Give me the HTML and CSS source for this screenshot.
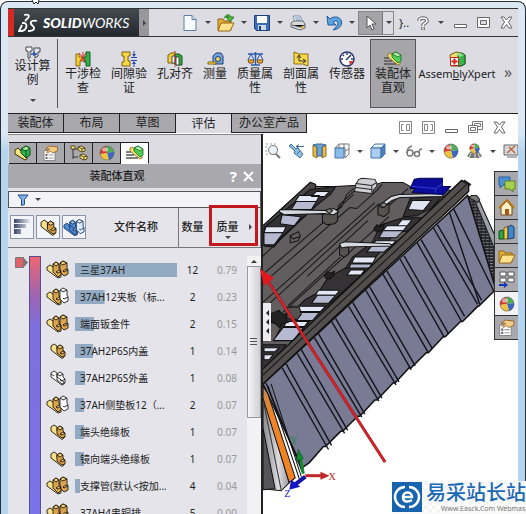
FILE: index.html
```html
<!DOCTYPE html>
<html lang="zh-CN">
<head>
<meta charset="utf-8">
<meta name="viewport" content="width=device-width, initial-scale=1">
<title>SOLIDWORKS</title>
<link rel="stylesheet" href="styles.css">
</head>
<body>
<svg class="defs" aria-hidden="true">
  <defs>
    <symbol id="part" viewBox="0 0 16 16"><path fill="#f8e08a" stroke="#211a0c" stroke-width=".9" d="M1 3l3-2 3 2v4l7 5v2l-2 1.500L1 7z"/><path fill="#d9a04a" stroke="#211a0c" stroke-width=".9" d="M7 4l3-2 3 2v3l2 2v4l-3 1-5-4z"/><path fill="#f3cd7a" stroke="#211a0c" stroke-width=".9" d="M7 4l3-2 3 2-3 2zM10 10l3-2 2 1-3 2z"/></symbol>
    <symbol id="part-white" viewBox="0 0 16 16"><path fill="#fff" stroke="#222" stroke-width=".9" d="M1 3l3-2 3 2v4l7 5v2l-2 1L1 7zM7 4l3-2 3 2v3l2 2v4l-3 1-5-4zM7 4l3 2 3-2M10 10l2 1 3-2M1 4l3 2"/></symbol>
    <symbol id="asm" viewBox="0 0 23 19"><path fill="#f8e08a" stroke="#211a0c" stroke-width=".9" d="M1 7l3-2 3 2 4 3 4 5v2l-3 1L1 10z"/><path fill="#dba44e" stroke="#211a0c" stroke-width=".9" d="M7 4l3-2 3 2v5l2 2v4l-3 2-5-5zM14 3l3-2 4 2v5l1 2v4l-4 2-4-4z"/><path fill="#f3cd7a" stroke="#211a0c" stroke-width=".9" d="M7 4l3-2 3 2-3 2zM14 3l3-2 4 2-4 2zM10 12l3-2 2 1-3 2zM17 11l3-2 2 1-4 2z"/></symbol>
    <symbol id="asm-mixed" viewBox="0 0 23 19"><path fill="#f8e08a" stroke="#211a0c" stroke-width=".9" d="M1 7l3-2 3 2 4 3 4 5v2l-3 1L1 10z"/><path fill="#dba44e" stroke="#211a0c" stroke-width=".9" d="M7 4l3-2 3 2v5l2 2v4l-3 2-5-5z"/><path fill="#f3cd7a" stroke="#211a0c" stroke-width=".9" d="M7 4l3-2 3 2-3 2zM10 12l3-2 2 1-3 2z"/><path fill="#fff" stroke="#222" stroke-width=".9" d="M14 3l3-2 4 2v5l1 2v4l-4 2-4-4zM14 3l3 2 4-2M17 11l1 1 4-2"/></symbol>
    <symbol id="asm-green" viewBox="0 0 17 16"><path fill="#f8e57a" stroke="#3c3208" d="M1 5l3-2 3 3 6 6v2l-2 1L1 9z"/><path fill="#33b44c" stroke="#0c4a1b" d="M7 4l5-3 4 2v7l-4 3-5-5z"/><path fill="#a2e492" stroke="#0c4a1b" d="M7 4l5-3 4 2-4 3z"/><path stroke="#0c4a1b" fill="none" d="M12 6v7"/></symbol>
    <symbol id="lines-part" viewBox="0 0 18 16"><path stroke="#555" stroke-width="1.500" d="M0 7h5M0 10h8M0 13h12"/><path fill="#f5e070" stroke="#7a6a12" stroke-width=".8" d="M4 3l2-1 10 8v3l-2 1L4 6z"/><path fill="#52cf55" stroke="#126a24" stroke-width=".8" d="M8 3l4-2 5 3v6l-3 2-6-6z"/><path fill="#b6efa0" stroke="#126a24" stroke-width=".8" d="M8 3l4-2 5 3-3 2z"/></symbol>
    <symbol id="ball" viewBox="0 0 16 16"><path fill="#d8392f" d="M8 8L1 9a7 7 0 0 1 6-8z"/><path fill="#4fae52" d="M8 8L7 1a7 7 0 0 1 8 6z"/><path fill="#3a66c4" d="M8 8l7-1a7 7 0 0 1-5 8z"/><path fill="#f0c23d" d="M8 8l2 7a7 7 0 0 1-9-6z"/><circle cx="8" cy="8" r="7" fill="none" stroke="#5b5b66" stroke-width=".6"/><ellipse cx="6" cy="4.500" rx="3" ry="2" fill="#fff" opacity=".55"/></symbol>
    <symbol id="note-hand" viewBox="0 0 16 16"><path fill="#fff" stroke="#888" d="M1.500 5.500h11v10h-11z"/><path stroke="#999" d="M6 10h5M6 13h5"/><path fill="#666" d="M3 9h2v2H3zM3 12h2v2H3z"/><path fill="#f2cb86" stroke="#8a5a1d" stroke-width=".8" d="M3 4l4-3 8 1v4l-5 2-2-2-3 2-1-1 3-3z"/></symbol>
    <symbol id="close" viewBox="0 0 13 13"><path fill="#fff" stroke="#666" d="M1 1h3l2.500 3L9 1h3L8.500 6 12 12H9L6.500 8.500 4 12H1l3.500-6z"/></symbol>
    <symbol id="min" viewBox="0 0 13 13"><path fill="#fff" stroke="#666" d="M.5 8.500h12v3H.5z"/></symbol>
    <symbol id="folder" viewBox="0 0 18 16"><path fill="#e3ae37" stroke="#936712" d="M1 3h5l1 2h7v9H1z"/><path fill="#ffe28a" stroke="#936712" d="M4 7h13l-4 8H1z"/></symbol>
  </defs>
</svg>

<div class="window">
  <svg class="pointer-tip" viewBox="0 0 12 5" aria-hidden="true"><path fill="#fff" stroke="#222" d="M3 0l2 4 2-2 2 2 1-4"/></svg>

  <header class="titlebar">
    <div class="brand">
      <svg class="brand-mark" viewBox="0 0 20 20" aria-hidden="true"><g fill="none" stroke="#fff" stroke-width="1.800"><path d="M6 2c4-1 6 0 4 3L7 8"/><path d="M4 10h2c4 0 3 7-2 8H1l3-6"/><path d="M19 8c-4-1-7 0-6 3 1 2 4 2 3 5-1 2-3 2-6 2"/></g></svg>
      <span class="brand-name"><b>SOLID</b>WORKS</span>
    </div>
    <button class="brand-more" aria-label="菜单"><i class="tri-right"></i></button>
    <div class="quick">
      <div class="split"><button aria-label="新建"><svg width="14" height="16" viewBox="0 0 14 16"><path fill="#f7fbff" stroke="#5d7da0" d="M1 .5h8l4 4v11H1z"/><path fill="#cfe0f0" stroke="#5d7da0" d="M9 .5v4h4"/></svg></button><i class="tri"></i></div>
      <div class="split"><button aria-label="打开"><svg width="18" height="18" viewBox="0 0 18 18"><use href="#folder" y="2" width="18" height="16"/><path fill="#50b83c" stroke="#1e7517" stroke-width=".8" d="M7 4c2-4 6-4 7-1h3l-4 5-4-5h3c-1-1-3-1-5 1z"/></svg></button><i class="tri"></i></div>
      <div class="split"><button aria-label="保存"><svg width="16" height="16" viewBox="0 0 16 16"><path fill="#3c6fb7" stroke="#1d3f7c" d="M.5.5h15v15h-13l-2-2z"/><path fill="#fff" d="M3 1h10v7H3z"/><path fill="#cdd7e6" d="M4 10h8v5H4z"/><path fill="#1d3f7c" d="M5 11h2v4H5z"/></svg></button><i class="tri"></i></div>
      <div class="split"><button aria-label="打印"><svg width="16" height="16" viewBox="0 0 16 16"><path fill="#fff" stroke="#7b8ea5" d="M3 1h7l3 6H5z"/><path stroke="#5c8cc0" d="M5 3h5M6 5h5"/><path fill="#d9d9dc" stroke="#666" d="M1 8l3-2h9l2 3v4l-5 2-9-3z"/><path stroke="#555" d="M2 10l8 2 5-2"/><path fill="#e5c04b" d="M11 12l3-1v2l-3 1z"/></svg></button><i class="tri"></i></div>
      <div class="split"><button aria-label="撤销"><svg width="17" height="16" viewBox="0 0 17 16"><path fill="#5ca2dc" stroke="#225b9c" d="M1 1l1 9 8 0-3-3c4-3 7 1 3 5l-3 3c9-1 11-9 6-12-3-2-7-1-9 1z"/></svg></button><i class="tri"></i></div>
      <div class="split select-tool"><button aria-label="选择"><svg width="12" height="16" viewBox="0 0 12 16"><path fill="#fff" stroke="#555" d="M2 1v12l3-3 2 5 2-1-2-5h4z"/></svg></button><i class="tri"></i></div>
      <span class="clipped">}..</span>
    </div>
    <div class="window-tools">
      <button aria-label="帮助" class="help"><svg width="12" height="14" viewBox="0 0 12 14"><path fill="none" stroke="#666" stroke-width="3.600" d="M2 5c0-4 8-4 8 0 0 2-4 2-4 5M6 11v3"/><path fill="none" stroke="#fff" stroke-width="1.600" d="M2 5c0-4 8-4 8 0 0 2-4 2-4 5M6 11.500v2"/></svg><i class="tri"></i></button>
      <button aria-label="最小化"><svg width="13" height="13"><use href="#min"/></svg></button>
      <button aria-label="最大化"><svg width="13" height="11" viewBox="0 0 13 11"><path fill="#fff" stroke="#666" d="M.5.5h12v10H.5z"/><path fill="#d9d9dd" stroke="#666" d="M3.500 3.500h6v4h-6z"/></svg></button>
      <button aria-label="关闭"><svg width="13" height="13"><use href="#close"/></svg></button>
    </div>
  </header>

  <div class="ribbon">
    <button class="study"><svg width="16" height="13" viewBox="0 0 16 13"><path fill="#fff" stroke="#444" d="M1 1h6v4H5v7H3V5H1z"/><path fill="#dce5f4" stroke="#444" d="M9 2h6v4h-2v4l-3 2V7H9z"/><path stroke="#2753b5" stroke-width="1.500" d="M6 8h6M9 6v4"/></svg><span>设计算<br>例</span><i class="tri"></i></button>
    <button><svg width="16" height="16" viewBox="0 0 16 16"><path fill="#f6cf32" stroke="#8b6a0a" d="M1 3h3v3h3v4H5v5H1z"/><path fill="#34b04c" stroke="#0d6122" d="M11 1h4v14h-4v-4H9V6h2z"/><path stroke="#d82a20" d="M4 2l7 8M11 2L5 10M8 1v10"/></svg><span>干涉检<br>查</span></button>
    <button><svg width="16" height="16" viewBox="0 0 16 16"><path fill="#f8d94b" stroke="#7d5e09" d="M1 1h8v4H7v5h2v5H1v-4h2V5H1z"/><path stroke="#2448b3" d="M10 6.500h6M10 9.500h6"/><path fill="#2448b3" d="M11 3h4l-2 3zM11 13h4l-2-3z"/><path stroke="#2448b3" d="M13 0v4M13 12v4"/></svg><span>间隙验<br>证</span></button>
    <button><svg width="16" height="16" viewBox="0 0 16 16"><path fill="#f3d042" stroke="#7c610b" d="M1 4l3-2h4v10H1z"/><path fill="#2fae45" stroke="#0f5a20" d="M8 3h4l3 2v9H8z"/><path fill="#fff" stroke="#444" d="M5 5h3v7H5zM9 6h3v8H9z"/><path stroke="#cc2b20" stroke-dasharray="2 1" d="M8 0v16"/></svg><span>孔对齐</span></button>
    <button class="narrow"><svg width="17" height="16" viewBox="0 0 17 16"><path fill="#73a3dd" stroke="#1f3f7a" d="M6 5l3-3h5l2 3v8H6z"/><circle cx="11" cy="8" r="2.500" fill="#ecd55b" stroke="#1f3f7a"/><path fill="#f6d94e" stroke="#8b6c0e" d="M1 11h8v2H1z"/></svg><span>测量</span></button>
    <button><svg width="17" height="16" viewBox="0 0 17 16"><path stroke="#2b59ad" stroke-width="1.500" fill="none" d="M1 3h15M8.500 1v13M4 14h9"/><path fill="#f2b33c" stroke="#7c4d0f" d="M1 9h6l-1 3H2zM10 9h6l-1 3h-4z"/><path stroke="#2b59ad" fill="none" d="M4 3L1 9M4 3l3 6M13 3l-3 6M13 3l3 6"/></svg><span>质量属<br>性</span></button>
    <button><svg width="16" height="16" viewBox="0 0 16 16"><path fill="#f7d84b" stroke="#8f7010" d="M1 1l5 2h9v12L10 13H1z"/><path stroke="#333" fill="none" d="M6 5v5h6M4 7l2-3 2 3M10 8l3 2-3 2"/></svg><span>剖面属<br>性</span></button>
    <button><svg width="16" height="16" viewBox="0 0 16 16"><circle cx="8" cy="8" r="7" fill="#fff" stroke="#29336b" stroke-width="1.500"/><path stroke="#29336b" stroke-width="1.500" d="M8 2v2M2 8h2M12 8h2M4 4l1 1M12 4L7 9"/><path fill="#e1362b" d="M10 10h5l-4 4z"/></svg><span>传感器</span></button>
    <button class="pressed"><svg width="18" height="16"><use href="#lines-part"/></svg><span>装配体<br>直观</span></button>
    <button class="xpert"><svg width="17" height="16" viewBox="0 0 17 16"><path fill="#f5dd70" stroke="#6b5a12" d="M1 4l6-3 5 1 4 2v9l-4 2H2z"/><path fill="#35b44c" stroke="#0e5f22" d="M9 4l4-2 3 2v9l-4 2H9z"/><path fill="#8fe08a" d="M7 3l4-1 4 2-4 2z"/><path fill="#fff" stroke="#c6271e" d="M1.500 6.500h8v8h-8z"/><path stroke="#d8251b" stroke-width="2" d="M5.500 7.500v6M2.500 10.500h6"/></svg><span>Assem<u>b</u>lyXpert</span></button>
    <button class="more" aria-label="更多">»</button>
  </div>

  <div class="tab-strip">
    <nav class="tabs">
      <button>装配体</button><button>布局</button><button>草图</button><button class="active">评估</button><button class="wide">办公室产品</button>
    </nav>
    <div class="doc-tools">
      <button aria-label="左窗格"><svg width="13" height="13" viewBox="0 0 13 13"><path fill="#fff" stroke="#888" d="M.5.5h12v12H.5zM4.500 3.500h-2v6h2M7.500 3.500h3v6h-3z"/></svg></button>
      <button aria-label="右窗格"><svg width="13" height="13" viewBox="0 0 13 13"><path fill="#fff" stroke="#888" d="M.5.5h12v12H.5zM8.500 3.500h2v6h-2M2.500 3.500h3v6h-3z"/></svg></button>
      <button aria-label="最小化文档"><svg width="13" height="13"><use href="#min"/></svg></button>
      <button aria-label="还原文档"><svg width="15" height="13" viewBox="0 0 15 13"><path fill="#fff" stroke="#777" d="M4.500.5h10v8h-10zM6.500 2.500h6v3h-6z"/><path fill="#fff" stroke="#777" d="M.5 4.500h9v7h-9zM2.500 6.500h5v3h-5z"/></svg></button>
      <button aria-label="关闭文档"><svg width="13" height="13"><use href="#close"/></svg></button>
    </div>
  </div>

  <main class="workspace">
    <section class="panel">
      <div class="panel-tabs">
        <button aria-label="设计树"><svg width="17" height="16"><use href="#asm-green"/></svg></button>
        <button aria-label="属性"><svg width="17" height="16"><use href="#note-hand"/></svg></button>
        <button aria-label="配置"><svg width="18" height="16" viewBox="0 0 18 16"><path stroke="#333" fill="none" d="M3 1v13M3 4h5M3 12h5"/><path fill="#f8e684" stroke="#4a3d10" stroke-width=".9" d="M8 2l3-1 4 2v3l-3 1-4-2zM10 10l3-1 4 2v3l-3 1-4-2zM1 1h4v3H1z"/><path fill="none" stroke="#4a3d10" stroke-width=".9" d="M8 2l4 2 3-1M12 4v3M10 10l4 2 3-1M14 12v3"/></svg></button>
        <button aria-label="外观"><svg width="16" height="16"><use href="#ball"/></svg></button>
        <button class="active" aria-label="直观"><svg width="18" height="16"><use href="#lines-part"/></svg></button>
      </div>
      <div class="panel-title">
        <h2>装配体直观</h2>
        <button aria-label="说明">?</button>
        <button aria-label="关闭面板"><svg width="11" height="11" viewBox="0 0 11 11"><path stroke="#fff" stroke-width="2" d="M1 1l9 9M10 1l-9 9"/></svg></button>
      </div>
      <label class="filter">
        <svg width="12" height="12" viewBox="0 0 12 12"><path fill="#7fb3e4" stroke="#1b4c8c" d="M1 1h10L7.500 5.500v5l-3 1v-6z"/></svg>
        <i class="tri"></i>
        <input type="text" aria-label="过滤器">
      </label>

      <table class="parts">
        <colgroup><col class="c-gutter"><col class="c-scale"><col class="c-icon"><col><col class="c-qty"><col class="c-mass"><col class="c-scroll"></colgroup>
        <thead>
          <tr>
            <th colspan="4"><div class="name-head">
              <button aria-label="条形"><svg width="22" height="22" viewBox="0 0 22 22"><defs><linearGradient id="fade"><stop stop-color="#3b466e"/><stop offset="1" stop-color="#f4f5fb"/></linearGradient></defs><path fill="url(#fade)" d="M3 3h17v4H3zM3 8h12v4H3zM3 13h7v5H3z"/></svg></button>
              <button aria-label="零件"><svg width="17" height="17"><use href="#part"/></svg></button>
              <button aria-label="装配体"><svg width="22" height="19" viewBox="0 0 23 19"><path fill="#4f8bd3" stroke="#16345f" stroke-width=".9" d="M1 7l3-2 3 2 4 3 4 5v2l-3 1L1 10zM7 4l3-2 3 2v5l2 2v4l-3 2-5-5z"/><path fill="#8fbdec" stroke="#16345f" stroke-width=".9" d="M7 4l3-2 3 2-3 2zM10 12l3-2 2 1-3 2z"/><path fill="#dbe9f9" stroke="#16345f" stroke-width=".9" d="M14 3l3-2 4 2v5l1 2v4l-4 2-4-4zM14 3l3 2 4-2M17 11l1 1 4-2"/></svg></button>
              <span>文件名称</span>
            </div></th>
            <th class="qty-head">数量</th>
            <th class="mass-head" colspan="2"><span>质量<i class="tri"></i></span><i class="tri-right"></i></th>
          </tr>
        </thead>
        <tbody>
          <tr>
            <td class="gutter" rowspan="10"><svg width="14" height="12" viewBox="0 0 14 12"><path fill="#e0606b" stroke="#777" d="M.5.5h8v10h-8z"/><path fill="#777" d="M8 0l5 5.500L8 11z"/></svg></td>
            <td class="scale" rowspan="10"></td>
            <td class="icon"><svg width="23" height="19"><use href="#asm"/></svg></td><td class="name"><div style="--share:100%">三星37AH</div></td><td class="qty">12</td><td class="mass">0.79</td>
            <td class="scroll" rowspan="10"><div class="scroll-up"><i class="tri-up"></i></div><div class="thumb"><i></i></div></td>
          </tr>
          <tr><td class="icon"><svg width="23" height="19"><use href="#asm-mixed"/></svg></td><td class="name"><div style="--share:29%">37AH12夹板（标...</div></td><td class="qty">2</td><td class="mass">0.23</td></tr>
          <tr><td class="icon"><svg width="23" height="19"><use href="#asm"/></svg></td><td class="name"><div style="--share:19%">端面钣金件</div></td><td class="qty">2</td><td class="mass">0.15</td></tr>
          <tr><td class="icon"><svg width="16" height="16"><use href="#part"/></svg></td><td class="name"><div style="--share:18%">37AH2P6S内盖</div></td><td class="qty">1</td><td class="mass">0.14</td></tr>
          <tr><td class="icon"><svg width="16" height="16"><use href="#part-white"/></svg></td><td class="name"><div style="--share:10%">37AH2P6S外盖</div></td><td class="qty">1</td><td class="mass">0.08</td></tr>
          <tr><td class="icon"><svg width="23" height="19"><use href="#asm-mixed"/></svg></td><td class="name"><div style="--share:9%">37AH侧垫板12（...</div></td><td class="qty">2</td><td class="mass">0.07</td></tr>
          <tr><td class="icon"><svg width="16" height="16"><use href="#part"/></svg></td><td class="name"><div style="--share:9%">端头绝缘板</div></td><td class="qty">1</td><td class="mass">0.07</td></tr>
          <tr><td class="icon"><svg width="16" height="16"><use href="#part"/></svg></td><td class="name"><div style="--share:9%">镜向端头绝缘板</div></td><td class="qty">1</td><td class="mass">0.07</td></tr>
          <tr><td class="icon"><svg width="23" height="19"><use href="#asm"/></svg></td><td class="name"><div style="--share:5%">支撑管(默认&lt;按加...</div></td><td class="qty">4</td><td class="mass">0.04</td></tr>
          <tr><td class="icon"><svg width="23" height="19"><use href="#asm"/></svg></td><td class="name"><div style="--share:0%">37AH4串铜排</div></td><td class="qty">5</td><td class="mass">0.00</td></tr>
        </tbody>
      </table>
    </section>

    <section class="viewport">
      <svg class="model" viewBox="263 136 255 378" preserveAspectRatio="xMinYMin slice" role="img" aria-label="电池模组">
        <defs>
          <pattern id="fins" width="4" height="3" patternUnits="userSpaceOnUse"><path fill="#24242a" d="M0 0h4v3H0z"/><path fill="#8b8c94" d="M0 0h3v1H0z"/></pattern>
          <linearGradient id="column"><stop stop-color="#8a8a8e"/><stop offset=".6" stop-color="#dcdce0"/><stop offset="1" stop-color="#9a9aa0"/></linearGradient>
          <linearGradient id="stripe" x2="0" y2="1"><stop stop-color="#c08a55"/><stop offset=".3" stop-color="#f08326"/></linearGradient>
        </defs>
        <path fill="#625e5f" stroke="#111" d="M262 228l48-44 5 2 1 2h18l19-1h19l9-3h21l7 4 42 4 12-10 6 4L262 386z"/>
        <path fill="#4a4749" stroke="#111" d="M262 228l48-44 5 2v5l-53 48z"/>
        <g fill="none" stroke="#161616">
          <path d="M334 190l-72 68M353 190l-7 6-5 12-79 68M376 192l-20 18-7-1-87 76M381 186l-5 6M378 205l-115 105M374 204l-112 100M388 218l-120 108M335 212l18-16M337 208l17-16M367 222l-60 55M340 258l-52 48M407 190l-19 17"/>
          <path d="M290 237l8-4 2 4-2 5-8 2zM290 237l3 3 6-2"/>
        </g>
        <g stroke="#111" stroke-linejoin="round">
          <path fill="#343235" d="M310 191l25-3-5 8-18 14-31 29-7 9-10-1v-18z"/>
          <path fill="#e4e7f5" d="M316 193h13l-5 5h-13zM299 197h20l-3 6h-21zM266 228h20l-3 6h-19z"/>
          <path fill="#b6bad0" d="M296 203h20l-5 8h-20zM282 216l19 2-7 9-14-2zM264 234h19l-9 12h-10z"/>
          <path fill="#343235" d="M409 200l32-3-10 12-15 8-14 1z"/>
          <path fill="#dfe3f2" d="M411 202h19l-8 10-15-1z"/>
          <path fill="#343235" d="M402 219h19l-13 13-14 2-14 18-14 16-13 11-15 1 14-22 19-14 9-18z"/>
          <path fill="#e4e7f5" d="M401 221h10l-5 6h-10zM386 227h20l-4 5h-20zM375 242h20l-4 4h-20zM354 258h21l-3 6h-21z"/>
          <path fill="#b6bad0" d="M382 232h20l-7 7h-17zM371 247h19l-7 6h-17zM350 265h21l-9 13h-17z"/>
          <path fill="#343235" d="M345 269h24l-24 21-33 30-17 18-21 3 10-20 20-20 14-8 10-15z"/>
          <path fill="#e4e7f5" d="M350 271h14l-4 5h-14zM318 291h21l-4 5h-20zM291 307h34l-5 5h-29zM286 322h22l-4 5h-20z"/>
          <path fill="#b6bad0" d="M317 296h18l-7 8h-17zM298 313h21l-7 8h-16zM283 328h20l-10 13h-20z"/>
          <path fill="#343235" d="M262 345h24l-10 14-14 12z"/>
          <path fill="#dfe3f2" d="M264 348h15l-4 4h-11zM264 355h9l-4 5h-5z"/>
        </g>
        <g stroke="#111">
          <path fill="#55524f" d="M322 214h15v8l-3 3-8 1-4-3zM377 208l11-4v10l-5 4-6-2zM339 247h9v8l-4 3-5-2z"/>
          <path fill="#d6d9df" d="M279 213l1-2 44 1 9-2 5 3-5 3-9-1-40 1z"/>
          <path fill="#d6d9df" d="M378 207l12-9 8-2 44-1-1 3-42 1-8 3-10 7z"/>
          <path fill="#d6d9df" d="M339 245l5-2 45 2 2 2-45 1-5 1z"/>
          <path fill="#888" d="M325 212l4-2 3 2-3 3zM379 206l4-2 3 2-3 3z"/>
          <path fill="#222" d="M373 230l3-4 3 2 4-2-1 5-4 2-4-1zM324 276l3-4 3 2 4-2-1 5-4 3-4-1zM271 314l8-3 3 4 5-1-2 5 3 4-6 1-3 4-4-4-4-1z"/>
          <path fill="#55524f" d="M286 308h13l2 7-4 5-10-1z"/>
        </g>
        <path fill="#cfcfd3" stroke="#222" d="M358 181l3-1 13 1 2 4v3l-3 3-2 4-17-2 1-7z"/><path fill="none" stroke="#222" d="M355 185l16 2 5-3M371 187v7M355 189l16 2"/>
        <path fill="#0b0b9c" stroke="#04044a" d="M413 181l6-1h22v8l8 0-7 8-31-2 3-4-5 0z"/><path stroke="#2f38d8" fill="none" d="M411 188l24 2 6-5M434 190v4"/>
        <path fill="url(#fins)" stroke="#222" d="M466 198l10 1 18 40v53z"/><path fill="#9d9ea8" stroke="#222" d="M472 199h4l18 40v14z"/><path fill="#777" stroke="#222" d="M467 199l3-2 5 0 3 4-2 3z"/>
        <path fill="#787b93" stroke="#111" stroke-width="1.500" d="M263 384l203-187 28 93-17 17-1 0-15 15-2 0-15 15-2 0-15 16-2 0-15 15-2 0-14 15-2 0-16 17-2 0-15 16-2 0-15 15-2 0-15 15-2 0-14 16-7 5z"/>
        <g fill="none" stroke="#14141c" stroke-width="1.400">
          <path d="M266 383l36 88M282 368l46 81M297 354l47 79M314 338l47 79M331 322l47 79M348 307l47 78M365 291l45 79M382 275l45 78M399 260l44 78M416 244l44 78M432 229l44 76M448 214l30 91"/>
          <path d="M286 364l45 81M301 350l46 80M318 334l46 80M335 319l46 79M352 303l46 79M369 288l45 78M386 272l45 77M403 257l44 77M420 241l43 76M436 226l44 75M452 210l40 82"/>
        </g>
        <path fill="#524f4e" stroke="#111" stroke-width="1.400" d="M262 370l198-188 7 4v7L262 385z"/><path stroke="#151515" fill="none" d="M262 376l203-190"/>
        <path fill="url(#column)" stroke="#111" d="M263 394l26 88-8 8-18-2z"/><path fill="#55555a" stroke="#111" d="M263 428l12 60-12 1z"/><path stroke="#333" d="M264 404l17 85"/>
        <path fill="url(#stripe)" stroke="#111" d="M263 386l5 8 27 83-6 5-26-84z"/><path fill="none" stroke="#111" d="M268 386l31 92M271 384l30 92"/>
        <path stroke="#c02929" stroke-width="3" d="M305 475h17"/><path fill="#c02929" d="M320 471l9 4-9 4z"/>
        <path stroke="#118a32" stroke-width="3" d="M303 473l-3-16"/><path fill="#118a32" stroke="#064a18" stroke-width=".5" d="M296 460l2-11 5 9z"/>
        <path stroke="#1515a5" stroke-width="4" d="M305 476l-12 9"/><path fill="#1515c5" d="M289 489l2-10 9 7z"/>
        <g class="axis"><text x="328" y="479" fill="#c02929">X</text><text x="290" y="444" fill="#118a32">Y</text><text x="284" y="496" fill="#1515c5">Z</text></g>
      </svg>

      <div class="view-tools">
        <button aria-label="整屏显示"><svg width="16" height="16" viewBox="0 0 16 16"><path stroke="#999" stroke-dasharray="2 2" fill="none" d="M1 1h10v10H1z"/><circle cx="8" cy="7" r="4.500" fill="#eef3f8" stroke="#777"/><path stroke="#777" stroke-width="2" d="M11 11l4 4"/></svg></button>
        <button aria-label="上一视图"><svg width="16" height="16" viewBox="0 0 16 16"><path fill="#8fbde4" stroke="#456f9b" d="M1 3l2-2 5 5 2-1 5 6-3 4-6-5 1-2z"/><path stroke="#456f9b" fill="none" d="M8 3.500h8M8 3.500l3-2M8 3.500l3 2M9 11l3-3"/></svg></button>
        <button aria-label="剖面视图"><svg width="15" height="16" viewBox="0 0 15 16"><path fill="#e5bd45" stroke="#8f7222" d="M1 2l4 2v11l-4-2zM10 4l4-2v11l-4 2z"/><path fill="#6da2d6" stroke="#41658f" d="M1 2l4-1h5l4 1-4 2v9H5V4z"/></svg></button>
        <button class="drop" aria-label="视图定向"><svg width="16" height="16" viewBox="0 0 16 16"><path fill="#fff" stroke="#777" d="M5 1h10v10l-4 4V5H1z"/><path fill="#8dbbe7" stroke="#4775a7" d="M1 5h9v10H1z"/><path stroke="#777" d="M5 1v4M10 1v4M15 6l-4 2"/></svg><i class="tri"></i></button>
        <button class="drop" aria-label="显示样式"><svg width="16" height="16" viewBox="0 0 16 16"><path fill="#e5f1fd" stroke="#4775a7" d="M1 5l4-4h10l-4 4z"/><path fill="#a8cff3" stroke="#4775a7" d="M1 5h10v10H1z"/><path fill="#4f7fb6" stroke="#4775a7" d="M11 5l4-4v10l-4 4z"/></svg><i class="tri"></i></button>
        <button class="drop" aria-label="隐藏显示"><svg width="16" height="16" viewBox="0 0 16 16"><g fill="none" stroke="#777" stroke-width="1.400"><circle cx="4" cy="10" r="3"/><circle cx="11" cy="11" r="2.500"/><path d="M1 10c0-4 1-6 5-7M7 10h2M13 10c0-3 1-4 3-4"/></g></svg><i class="tri"></i></button>
        <button aria-label="编辑外观"><svg width="16" height="16"><use href="#ball"/></svg></button>
        <button class="drop" aria-label="应用布景"><svg width="17" height="16" viewBox="0 0 17 16"><path fill="#777" d="M1 13l3-4h9l3 4-3 2H4z"/><path stroke="#ddd" d="M5 10l-2 5M9 10v5M12 10l2 5"/><use href="#ball" x="3" width="11" height="11"/></svg><i class="tri"></i></button>
        <button aria-label="视图设定"><svg width="15" height="16" viewBox="0 0 15 16"><path fill="#d8d8dc" stroke="#666" d="M1 2h14v10H1zM4 14h10"/><path stroke="#b66a3b" stroke-width="1.500" d="M4 10l8-7M6 4l6 6"/></svg></button>
      </div>

      <nav class="task-pane">
        <button aria-label="资源"><svg width="18" height="17" viewBox="0 0 18 17"><path fill="#4c91d5" stroke="#275d9a" d="M1 2h11v8H5l-3 3v-3H1z"/><path fill="#a6cf4d" stroke="#5a8423" d="M7 6h10v8h-2v3l-3-3H7z"/></svg></button>
        <button aria-label="主页"><svg width="17" height="17" viewBox="0 0 17 17"><path fill="#fff1c8" stroke="#6b4a19" d="M3 8l6-6 5 6v8H3z"/><path fill="none" stroke="#b47817" stroke-width="2" d="M1 9l8-8 7 8"/><path fill="#a55b1e" d="M7 10h4v6H7z"/></svg></button>
        <button aria-label="设计库"><svg width="17" height="17" viewBox="0 0 17 17"><path fill="#2fa447" stroke="#0d4d1b" d="M1 8l4-1 1 9H1z"/><path fill="#f2cd45" stroke="#735c11" d="M6 5l4-2v13H6z"/><path fill="#4687cc" stroke="#173f71" d="M10 4l3-2 3 2v11l-6 1z"/></svg></button>
        <button aria-label="文件探索器"><svg width="18" height="16"><use href="#folder"/></svg></button>
        <button aria-label="视图调色板"><svg width="17" height="17" viewBox="0 0 17 17"><path fill="#fff" stroke="#555" d="M2 1h6v4H2zM10 1h6v4h-6zM2 7h6v4H2zM10 7h6v4h-6z"/><path stroke="#1635b8" stroke-width="2" d="M1 14h6"/><path fill="#1635b8" d="M6 11l4 3-4 3z"/></svg></button>
        <button class="active" aria-label="外观布景"><svg width="16" height="16"><use href="#ball"/></svg></button>
        <button aria-label="自定义属性"><svg width="17" height="17"><use href="#note-hand"/></svg></button>
      </nav>
      <button class="flyout" aria-label="折叠面板"><i></i><i></i><i></i></button>
    </section>

    <svg class="callout" viewBox="0 0 130 200" aria-hidden="true"><path stroke="#8f1519" stroke-width="3" d="M7 10l119 184"/><path stroke="#d9242a" stroke-width="2" d="M7 10l119 184"/><path fill="#df1a1f" d="M1 1l14 9-10 8z"/></svg>
  </main>
</div>

<aside class="watermark">
  <svg width="30" height="30" viewBox="0 0 30 30" aria-hidden="true"><path fill="#1763ae" d="M0 0h30v30H0z"/><g fill="none" stroke="#fff" stroke-width="2.500"><path d="M13 5a10 10 0 0 0 0 20M17 5a10 10 0 0 1 0 20"/><path d="M11 15h9c0-6-9-6-9 0s6 5 9 3"/></g></svg>
  <p><strong>易采站长站</strong><small>Www.Easck.Com Webmaster</small></p>
</aside>
</body>
</html>
```
FILE: styles.css
```css
* { box-sizing: border-box; }

body {
  margin: 0;
  height: 100vh;
  overflow: hidden;
  position: relative;
  background: #fff;
  color: #222;
  font: 12px/14px "Noto Sans", "Noto Sans CJK SC", sans-serif;
}

button {
  display: flex;
  align-items: center;
  justify-content: center;
  padding: 0;
  border: 0;
  background: none;
  color: inherit;
  font: inherit;
}

svg { display: block; flex: none; }
.defs { position: absolute; width: 0; height: 0; }

.tri, .tri-right, .tri-up { display: block; flex: none; width: 0; height: 0; border: 3px solid transparent; }
.tri { border-top-color: #444; border-bottom: 0; }
.tri-up { border-bottom-color: #333; border-top: 0; }
.tri-right { border-left-color: #444; border-right: 0; }

.window {
  position: relative;
  display: flex;
  flex-direction: column;
  height: 100vh;
  padding: 6px 7px 0;
  border: 1px solid #26303c;
  border-bottom: 0;
  border-radius: 8px 8px 0 0;
  background: linear-gradient(#dbe8f4, #dbe8f4 130px, #b5d4ee 150px);
  margin-top: 1px;
}
.pointer-tip { position: absolute; top: -2px; left: 28px; width: 12px; height: 5px; }

/* title bar */
.titlebar {
  display: flex;
  flex: none;
  height: 29px;
  border: solid #333;
  border-width: 1px 0;
  background: #dcdce2;
}
.brand {
  display: flex;
  align-items: center;
  gap: 5px;
  width: 131px;
  padding-left: 4px;
  border-left: 6px solid #d22b26;
  background: linear-gradient(#434a50, #24292e);
  color: #fff;
}
.brand-mark { width: 20px; height: 20px; }
.brand-name { font: italic 14px/16px Lato, sans-serif; }
.brand-name b { font-weight: 900; }
.brand-more { width: 10px; background: #97979c; }
.quick { display: flex; align-items: center; padding-left: 29px; }
.split { display: flex; align-items: center; width: 36px; height: 24px; }
.split button { width: 24px; height: 100%; }
.split .tri { margin-left: 3px; }
.select-tool { border: 1px solid #888; }
.select-tool button { background: #a3a3a8; border-right: 1px solid #777; }
.clipped { margin-left: 5px; font-size: 11px; }
.window-tools { display: flex; align-items: center; gap: 10px; margin-left: auto; padding-right: 5px; }
.help { gap: 9px; }

/* ribbon */
.ribbon { display: flex; flex: none; height: 76px; padding-top: 2px; background: #dcdce2; }
.ribbon button { flex-direction: column; justify-content: flex-start; width: 46px; height: 69px; padding-top: 12px; }
.ribbon .study { width: 50px; margin-right: 2px; padding-top: 7px; border-right: 1px solid #555; }
.study .tri { margin-top: 12px; }
.ribbon .narrow { width: 34px; }
.ribbon .pressed { border: 1px solid #555; background: #a6a6aa; padding-top: 11px; }
.ribbon .xpert { width: 82px; font-size: 11px; }
.ribbon .more { width: 20px; font-size: 16px; padding-top: 26px; color: #555; }

/* command tabs */
.tab-strip { display: flex; flex: none; justify-content: space-between; height: 21px; border-top: 1px solid #222; background: #fff; }
.tabs { display: flex; }
.tabs button { width: 56px; border: solid #222; border-width: 0 1px 1px 0; background: #a9a9ad; height: 19px; }
.tabs .active { background: #dcdce2; border-bottom: 0; }
.tabs .wide { width: 75px; }
.doc-tools { display: flex; gap: 10px; padding: 7px 12px 0 0; align-items: flex-start; }

/* workspace */
.workspace { position: relative; display: grid; grid-template-columns: 255px 1fr; flex: 1; min-height: 0; }
.panel { overflow: hidden; border-right: 2px solid #222; background: #e4e4ea; }
.panel-tabs { display: flex; padding: 7px 0 0 1px; border-top: 1px solid #888; background: #dcdce2; }
.panel-tabs button { width: 28px; height: 22px; border: solid #222; border-width: 1px 1px 1px 0; background: #a9a9ad; }
.panel-tabs .active { background: #fff; border-bottom-color: #fff; }
.panel-title { display: flex; align-items: center; gap: 6px; height: 24px; padding-right: 7px; background: #a9a9ad; }
.panel-title h2 { flex: 1; margin: 0; padding-left: 2px; text-align: center; font-size: 11px; font-weight: 500; }
.panel-title button { color: #fff; font: bold 15px/16px "Noto Sans", sans-serif; }
.filter { display: flex; align-items: center; gap: 6px; height: 17px; margin-top: 3px; padding-left: 8px; border: 1px solid #555; background: #f4f4f8; }
.filter input { flex: 1; min-width: 0; height: 14px; padding: 0; border: 0; outline: 0; background: none; font: inherit; }

.parts { width: 100%; table-layout: fixed; border-collapse: collapse; font-size: 10px; }
.parts th, .parts td { padding: 0; }
.c-gutter { width: 21px; }
.c-scale { width: 11px; }
.c-icon { width: 35px; }
.c-qty { width: 30px; }
.c-mass { width: 39px; }
.c-scroll { width: 14px; }
.parts thead tr { height: 39px; border-bottom: 1px solid #777; }
.parts th { font-size: 11px; font-weight: 500; }
.name-head { display: flex; align-items: center; gap: 2px; padding-left: 2px; }
.name-head button { width: 24px; height: 24px; border: 1px solid #8a94a8; background: #f3f4f8; }
.name-head span { margin-left: 26px; }
.qty-head { box-shadow: inset 1px 0 #777; }
.parts .mass-head { position: relative; border-right: 1px solid #777; }
.mass-head span { display: block; text-align: left; padding-left: 9px; }
.mass-head span .tri { position: absolute; left: 17px; bottom: 8px; }
.mass-head > .tri-right { position: absolute; right: 8px; top: 16px; }
.mass-head::after {
  content: "";
  position: absolute;
  inset: -3px 2px 1px 1px;
  border: 3px solid #c3191e;
}
.parts tbody tr { height: 27px; }
.parts tbody::before { content: ""; display: table-row; height: 9px; }
.gutter, .scroll { vertical-align: top; }
.gutter svg { margin: 1px 0 0 7px; }
.scale { background: linear-gradient(#ee6670, #9b64b4 40px, #7d6fdc 70px, #7a72ea); border: 1px solid #5b4e90; }
.icon svg { margin: 0 auto; }
.parts .name { padding-right: 1px; }
.name div {
  height: 14px;
  padding-left: 5px;
  background: linear-gradient(#92abc3, #92abc3) no-repeat left / var(--share) 100%;
  line-height: 14px;
  white-space: nowrap;
}
.qty, .mass { text-align: center; }
.mass { padding-right: 2px; color: #999; }
.scroll { background: #f2f2f5; }
.scroll-up { display: grid; place-items: center; height: 10px; }
.thumb { display: grid; place-items: center; height: 152px; border: 1px solid #999; background: linear-gradient(90deg, #f7f7f9, #cfcfd5); }
.thumb i { width: 7px; height: 8px; background: repeating-linear-gradient(#555 0 1px, transparent 1px 3px); }

/* graphics area */
.viewport { position: relative; overflow: hidden; background: #fff; }
.model { position: absolute; inset: 0; width: 100%; height: 100%; }
.axis { font: 10px "Liberation Serif", serif; }
.view-tools { position: relative; display: flex; align-items: center; justify-content: space-between; padding: 9px 0 0 2px; }
.view-tools .drop { gap: 7px; }
.task-pane { position: relative; width: 24px; margin: 12px 0 0 auto; border: solid #333; border-width: 1px 0 0 1px; }
.task-pane button { width: 100%; height: 24px; border-bottom: 1px solid #333; background: #a9a9ad; }
.task-pane .active { background: #f2f2f4; }
.flyout { position: absolute; left: 0; top: 169px; flex-direction: column; gap: 3px; width: 8px; height: 38px; background: #ececf0; }
.flyout i { border: 3px solid transparent; border-left: 0; border-right-color: #222; }
.callout { position: absolute; left: 251px; top: 134px; width: 130px; height: 200px; }

.watermark {
  position: absolute;
  right: 0;
  bottom: 0;
  display: flex;
  gap: 4px;
  width: 134px;
  height: 33px;
  padding-top: 1px;
  overflow: hidden;
  background: repeating-conic-gradient(#fff 0 25%, #f4f4f4 0 50%) 0 0 / 8px 8px;
  white-space: nowrap;
}
.watermark p { display: flex; flex-direction: column; margin: 0; }
.watermark strong { color: #1c69b3; font-size: 20px; line-height: 22px; font-weight: 500; }
.watermark small { padding-left: 15px; color: #777; font-size: 7px; line-height: 10px; }
```
